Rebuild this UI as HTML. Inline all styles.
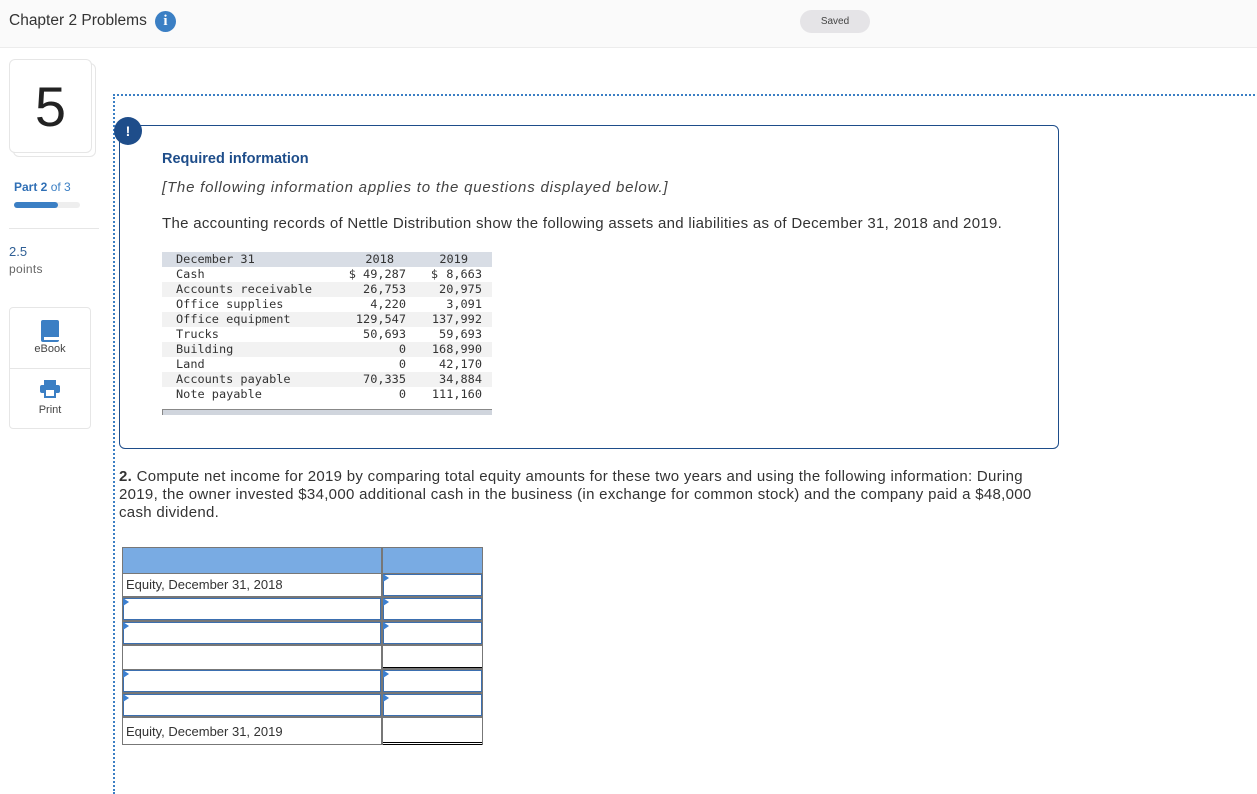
<!DOCTYPE html>
<html><head><style>
*{margin:0;padding:0;box-sizing:border-box}
body{width:1257px;height:768px;overflow:hidden;background:#fff;font-family:"Liberation Sans",sans-serif;color:#333;position:relative}
.abs{position:absolute}
.hdr{left:0;top:0;width:1257px;height:48px;background:#fafafa;border-bottom:1px solid #ececec}
.mono{font-family:"DejaVu Sans Mono","Liberation Mono",monospace;font-size:11.9px;color:#333}
.dr{position:absolute;left:162px;width:330px;height:15px;line-height:15px}
.dr span{position:absolute}
.l{left:14px}.a{right:86px}.b{right:10px}
.cell{position:absolute;background:#fff}
.tri{position:absolute;width:0;height:0;border-top:4px solid transparent;border-bottom:4px solid transparent;border-left:6px solid #3b7fd0}
</style></head><body>
<div class="abs hdr"></div>
<div class="abs" style="left:9px;top:12px;font-size:15.5px;color:#333">Chapter 2 Problems</div>
<div class="abs" style="left:155px;top:11px;width:21px;height:21px;border-radius:50%;background:#3b7fc4;color:#fff;font:bold 15px 'Liberation Serif',serif;text-align:center;line-height:21px">i</div>
<div class="abs" style="left:800px;top:10px;width:70px;height:23px;border-radius:12px;background:#e5e4e7;font-size:10px;text-align:center;line-height:23px;color:#444">Saved</div>

<div class="abs" style="left:13px;top:63px;width:83px;height:94px;border:1px solid #e6e6e6;border-radius:6px;background:#fff"></div>
<div class="abs" style="left:9px;top:59px;width:83px;height:94px;border:1px solid #e6e6e6;border-radius:6px;background:#fff;text-align:center;font-size:56px;line-height:94px;color:#222">5</div>
<div class="abs" style="left:14px;top:180px;font-size:12px;color:#3b7fc4"><b style="color:#2f6fb5">Part 2</b> of 3</div>
<div class="abs" style="left:14px;top:202px;width:66px;height:6px;border-radius:3px;background:#eee"></div>
<div class="abs" style="left:14px;top:202px;width:44px;height:6px;border-radius:3px;background:#3b7fc4"></div>
<div class="abs" style="left:9px;top:228px;width:90px;border-top:1px solid #e6e6e6"></div>
<div class="abs" style="left:9px;top:244px;font-size:13px;color:#2f5f95">2.5</div>
<div class="abs" style="left:9px;top:262px;font-size:12px;color:#666;letter-spacing:0.3px">points</div>
<div class="abs" style="left:9px;top:307px;width:82px;height:122px;border:1px solid #e6e6e6;border-radius:4px"></div>
<div class="abs" style="left:9px;top:368px;width:82px;border-top:1px solid #e6e6e6"></div>
<div class="abs" style="left:41px;top:320px;width:18px;height:22px;background:#3b7fc4;border-radius:2px"></div>
<div class="abs" style="left:44px;top:337px;width:15px;height:3px;background:#fff"></div>
<div class="abs" style="left:0;top:343px;width:100px;text-align:center;font-size:11px;color:#444">eBook</div>
<div class="abs" style="left:40px;top:385px;width:20px;height:8px;background:#3b7fc4;border-radius:2px"></div>
<div class="abs" style="left:44px;top:380px;width:12px;height:5px;background:#3b7fc4"></div>
<div class="abs" style="left:44px;top:390px;width:12px;height:8px;background:#fff;border:2px solid #3b7fc4;border-top:none"></div>
<div class="abs" style="left:0;top:404px;width:100px;text-align:center;font-size:11px;color:#444">Print</div>

<div class="abs" style="left:113px;top:94px;width:1150px;height:700px;border-left:2px dotted #3b7fc4;border-top:2px dotted #3b7fc4"></div>

<div class="abs" style="left:119px;top:125px;width:940px;height:324px;border:1px solid #1e4d8a;border-top:1.5px solid #1e4d8a;border-radius:0 6px 6px 6px"></div>
<div class="abs" style="left:114px;top:117px;width:28px;height:28px;border-radius:50%;background:#1e4d8a;color:#fff;font-weight:bold;font-size:14px;text-align:center;line-height:28px">!</div>
<div class="abs" style="left:162px;top:151px;font-size:14.5px;font-weight:bold;color:#1e4d8a">Required information</div>
<div class="abs" style="left:162px;top:179px;font-size:15px;font-style:italic;color:#444;letter-spacing:0.8px;white-space:nowrap">[The following information applies to the questions displayed below.]</div>
<div class="abs" style="left:162px;top:215px;font-size:15px;color:#333;letter-spacing:0.3px;white-space:nowrap">The accounting records of Nettle Distribution show the following assets and liabilities as of December 31, 2018 and 2019.</div>

<div class="mono">
<div class="dr" style="top:252px;background:#d8dde5"><span class="l">December 31</span><span style="right:98px">2018</span><span style="right:24px">2019</span></div>
<div class="dr" style="top:267px"><span class="l">Cash</span><span class="a">$ 49,287</span><span style="right:54px">$</span><span class="b">8,663</span></div>
<div class="dr" style="top:282px;background:#f2f2f2"><span class="l">Accounts receivable</span><span class="a">26,753</span><span class="b">20,975</span></div>
<div class="dr" style="top:297px"><span class="l">Office supplies</span><span class="a">4,220</span><span class="b">3,091</span></div>
<div class="dr" style="top:312px;background:#f2f2f2"><span class="l">Office equipment</span><span class="a">129,547</span><span class="b">137,992</span></div>
<div class="dr" style="top:327px"><span class="l">Trucks</span><span class="a">50,693</span><span class="b">59,693</span></div>
<div class="dr" style="top:342px;background:#f2f2f2"><span class="l">Building</span><span class="a">0</span><span class="b">168,990</span></div>
<div class="dr" style="top:357px"><span class="l">Land</span><span class="a">0</span><span class="b">42,170</span></div>
<div class="dr" style="top:372px;background:#f2f2f2"><span class="l">Accounts payable</span><span class="a">70,335</span><span class="b">34,884</span></div>
<div class="dr" style="top:387px"><span class="l">Note payable</span><span class="a">0</span><span class="b">111,160</span></div>
</div>
<div class="abs" style="left:162px;top:409px;width:330px;height:6px;background:#d0d5dd;border-left:1px solid #888;border-top:1px solid #888"></div>

<div class="abs" style="left:119px;top:468px;width:925px;font-size:15px;line-height:18px;color:#333;letter-spacing:0.3px"><b>2.</b> Compute net income for 2019 by comparing total equity amounts for these two years and using the following information: During 2019, the owner invested $34,000 additional cash in the business (in exchange for common stock) and the company paid a $48,000 cash dividend.</div>

<div class="abs" style="left:122px;top:547px;width:361px;height:198px;background:#777"></div>
<div class="cell" style="left:123px;top:548px;width:258px;height:25px;background:#79abe3"></div>
<div class="cell" style="left:383px;top:548px;width:99px;height:25px;background:#79abe3"></div>
<div class="cell" style="left:123px;top:574px;width:258px;height:22px;font-size:13px;line-height:22px;padding-left:3px;color:#333">Equity, December 31, 2018</div>
<div class="cell" style="left:383px;top:574px;width:99px;height:22px;border:1px solid #3b6fb0"></div>
<div class="cell" style="left:123px;top:598px;width:258px;height:22px;border:1px solid #3b6fb0"></div>
<div class="cell" style="left:383px;top:598px;width:99px;height:22px;border:1px solid #3b6fb0"></div>
<div class="cell" style="left:123px;top:622px;width:258px;height:22px;border:1px solid #3b6fb0"></div>
<div class="cell" style="left:383px;top:622px;width:99px;height:22px;border:1px solid #3b6fb0"></div>
<div class="cell" style="left:123px;top:646px;width:258px;height:23px"></div>
<div class="cell" style="left:383px;top:646px;width:99px;height:22px;border-bottom:1px solid #000"></div>
<div class="cell" style="left:123px;top:670px;width:258px;height:22px;border:1px solid #3b6fb0"></div>
<div class="cell" style="left:383px;top:670px;width:99px;height:22px;border:1px solid #3b6fb0"></div>
<div class="cell" style="left:123px;top:694px;width:258px;height:22px;border:1px solid #3b6fb0"></div>
<div class="cell" style="left:383px;top:694px;width:99px;height:22px;border:1px solid #3b6fb0"></div>
<div class="cell" style="left:123px;top:718px;width:258px;height:26px;font-size:13px;line-height:28px;padding-left:3px;color:#333">Equity, December 31, 2019</div>
<div class="cell" style="left:383px;top:718px;width:99px;height:27px;border-bottom:3px double #000"></div>
<div class="tri" style="left:383px;top:574px"></div>
<div class="tri" style="left:123px;top:598px"></div><div class="tri" style="left:383px;top:598px"></div>
<div class="tri" style="left:123px;top:622px"></div><div class="tri" style="left:383px;top:622px"></div>
<div class="tri" style="left:123px;top:670px"></div><div class="tri" style="left:383px;top:670px"></div>
<div class="tri" style="left:123px;top:694px"></div><div class="tri" style="left:383px;top:694px"></div>
</body></html>
